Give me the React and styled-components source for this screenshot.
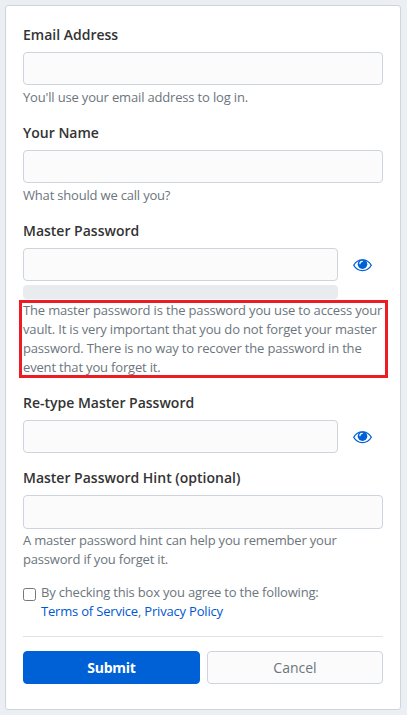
import React from "react";
import styled, { createGlobalStyle } from "styled-components";

const GlobalStyle = createGlobalStyle`
  *, *::before, *::after { box-sizing: border-box; }
  body {
    margin: 0;
    background: #ebeff4;
    color: #333;
    font-family: "Open Sans", "Noto Sans", sans-serif;
    font-size: 14px;
    line-height: 21px;
  }
`;

const Page = styled.main`
  width: 407px;
  height: 715px;
  padding: 5px 6px 5px 5px;
  overflow: hidden;
`;

const Card = styled.form`
  height: 705px;
  padding: 18px 17px 0;
  background: #fff;
  border: 1px solid #ced4dc;
  border-radius: 3px;
`;

const Field = styled.div`
  margin-bottom: ${({ $gap = 15 }) => $gap}px;
`;

const Label = styled.label`
  display: block;
  margin-bottom: 7px;
  font-weight: 600;
`;

const Input = styled.input`
  display: block;
  width: 100%;
  min-width: 0;
  height: ${({ $height = 33 }) => $height}px;
  padding: 6px 12px;
  background: #fbfbfb;
  border: 1px solid #ced4dc;
  border-radius: 4px;
  font: inherit;
`;

const Help = styled.small`
  display: block;
  position: relative;
  margin-top: ${({ $offset = 3 }) => $offset}px;
  color: #6c757d;
  font-size: 13px;
  line-height: 19px;
  letter-spacing: ${({ $tracking = -0.17 }) => $tracking}px;
  white-space: nowrap;
`;

const Highlight = styled.span`
  position: absolute;
  top: -1px;
  left: -4px;
  width: 369px;
  height: 78px;
  border: 3px solid #ed1c24;
`;

const PasswordRow = styled.div`
  display: flex;
`;

const PasswordColumn = styled.div`
  flex: 0 0 315px;
`;

const StrengthBar = styled.div`
  height: 14px;
  margin-top: 4px;
  background: #e9ecef;
  border-radius: 4px;
`;

const ToggleButton = styled.button`
  flex: 0 0 45px;
  height: 35px;
  padding: 0 0 0 4px;
  display: flex;
  align-items: center;
  justify-content: center;
  background: none;
  border: 0;
  color: #0060d6;
`;

const Agreement = styled.div`
  display: flex;
  gap: 5px;
  color: #6c757d;
  font-size: 13px;
  line-height: 19px;
  letter-spacing: -0.19px;
`;

const Checkbox = styled.input`
  appearance: none;
  width: 13px;
  height: 13px;
  margin: 5px 0 0;
  background: #fff;
  border: 1px solid #767676;
  border-radius: 2.5px;
`;

const Link = styled.a`
  color: #0057d2;
  text-decoration: none;
`;

const Divider = styled.hr`
  margin: 15px 0 14px;
  border: 0;
  border-top: 1px solid #e1e3e6;
`;

const Actions = styled.div`
  display: grid;
  grid-template-columns: 177px 176px;
  gap: 7px;
`;

const Button = styled.button`
  height: 33px;
  padding: 0;
  border: 1px solid ${({ $primary }) => ($primary ? "#0060d6" : "#ced4dc")};
  border-radius: 4px;
  background: ${({ $primary }) => ($primary ? "#0060d6" : "#fbfbfb")};
  color: ${({ $primary }) => ($primary ? "#fff" : "#6c757d")};
  font: ${({ $primary }) => ($primary ? 700 : 400)} 14px/21px "Open Sans", sans-serif;
  letter-spacing: ${({ $primary }) => ($primary ? "-0.25px" : "0")};
`;

function Eye() {
  return (
    <svg width="19" height="13" viewBox="0 0 19 13" aria-hidden="true">
      <path
        d="M.7 6.3C2.6 3 5.8.9 9.5.9s6.9 2.1 8.8 5.4c-1.9 3.3-5.1 5.4-8.8 5.4S2.6 9.6.7 6.3Z"
        fill="#fff"
        stroke="currentColor"
        strokeWidth="1.3"
      />
      <circle cx="9.5" cy="5.2" r="4.8" fill="currentColor" />
      <path d="M6.9 4.7c0-1.5 1-2.4 2.4-2.4" fill="none" stroke="#fff" strokeWidth="1.2" strokeLinecap="round" />
    </svg>
  );
}

function Toggle() {
  return (
    <ToggleButton type="button" aria-label="Toggle visibility">
      <Eye />
    </ToggleButton>
  );
}

export default function App() {
  return (
    <>
      <GlobalStyle />
      <Page>
        <Card>
          <Field>
            <Label htmlFor="email">Email Address</Label>
            <Input id="email" type="text" />
            <Help>You'll use your email address to log in.</Help>
          </Field>
          <Field>
            <Label htmlFor="name">Your Name</Label>
            <Input id="name" type="text" />
            <Help $tracking={-0.19}>What should we call you?</Help>
          </Field>
          <Field>
            <Label htmlFor="password">Master Password</Label>
            <PasswordRow>
              <PasswordColumn>
                <Input id="password" type="password" />
                <StrengthBar />
              </PasswordColumn>
              <Toggle />
            </PasswordRow>
            <Help $offset={2}>
              The master password is the password you use to access your<br />
              vault. It is very important that you do not forget your master<br />
              password. There is no way to recover the password in the<br />
              event that you forget it.
              <Highlight />
            </Help>
          </Field>
          <Field $gap={12}>
            <Label htmlFor="retype">Re-type Master Password</Label>
            <PasswordRow>
              <PasswordColumn>
                <Input id="retype" type="password" />
              </PasswordColumn>
              <Toggle />
            </PasswordRow>
          </Field>
          <Field $gap={14}>
            <Label htmlFor="hint">Master Password Hint (optional)</Label>
            <Input id="hint" type="text" $height={34} />
            <Help $offset={2} $tracking={-0.19}>
              A master password hint can help you remember your<br />
              password if you forget it.
            </Help>
          </Field>
          <Agreement>
            <Checkbox id="terms" type="checkbox" />
            <div>
              <label htmlFor="terms">By checking this box you agree to the following:</label>
              <br />
              <Link>Terms of Service</Link>, <Link>Privacy Policy</Link>
            </div>
          </Agreement>
          <Divider />
          <Actions>
            <Button type="button" $primary>Submit</Button>
            <Button type="button">Cancel</Button>
          </Actions>
        </Card>
      </Page>
    </>
  );
}
